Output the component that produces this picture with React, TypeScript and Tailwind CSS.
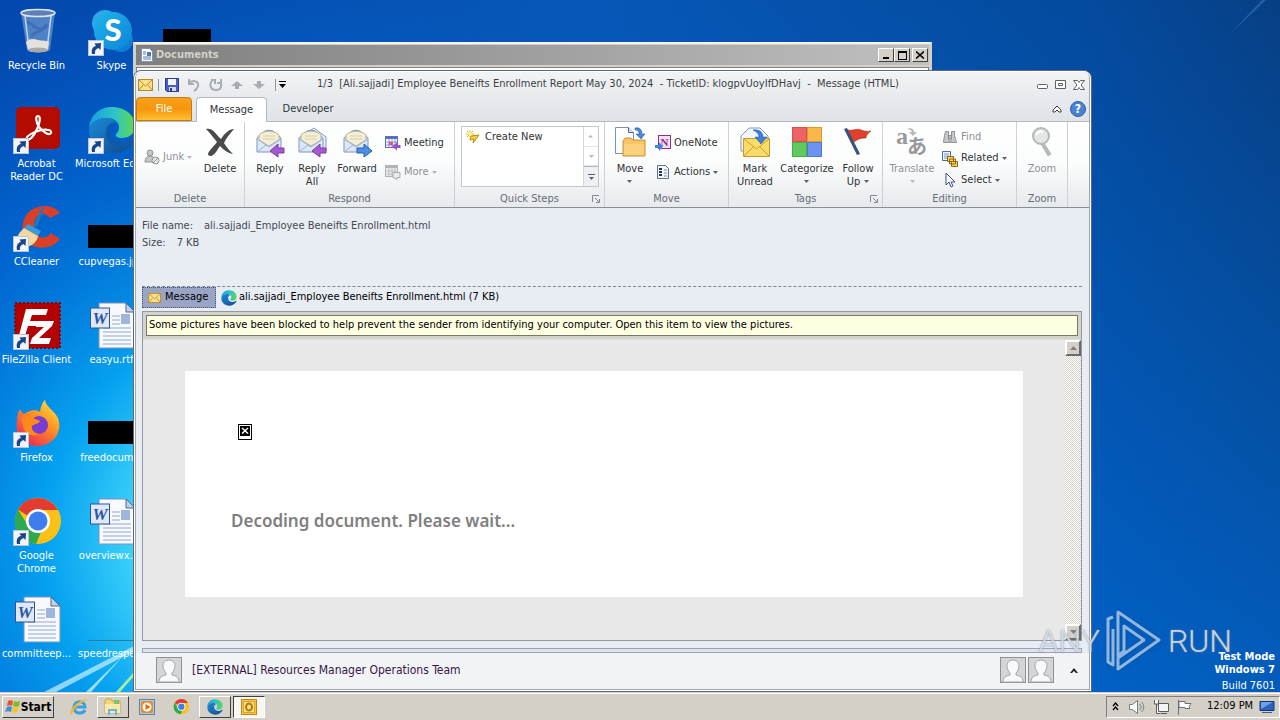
import type { ReactNode } from 'react';

type IconProps = { className?: string };

/* ---------- desktop icons ---------- */

function ShortcutArrow() {
  return (
    <svg viewBox="0 0 16 16" className="absolute bottom-0 left-0 size-4">
      <rect x="0.5" y="0.5" width="15" height="15" fill="#f2f4f7" stroke="#b9c4d4" />
      <path d="M4 14c-1-5 1-7.500 4-8L6.500 3.500 13 3l-.5 7-2-2C7.500 9 6.500 11 7 14z" fill="#17468f" />
    </svg>
  );
}

function RecycleBin() {
  return (
    <svg viewBox="0 0 48 48" className="size-12">
      <path d="M8 4h34l-5 38c-3 3-20 3-23 0z" fill="#6f9ad2" opacity="0.700" />
      <path d="M14 14c8 2 10 12 20 4M18 28c6-6 10-2 16-12" stroke="#2f5ea6" strokeWidth="3" opacity="0.500" fill="none" />
      <path d="M12 8l4 33M38 8l-4 33" stroke="#c4d6ec" strokeWidth="1.500" fill="none" />
      <path d="M13 34c4-4 8-3 12-2s7 0 11 2l-1 8c-4 3-17 3-20 0z" fill="#e4e2dc" />
      <ellipse cx="25" cy="42" rx="10" ry="2.500" fill="#a9a9a9" />
      <ellipse cx="25" cy="5" rx="17" ry="3.500" fill="#5d7fb4" stroke="#dfe6ee" strokeWidth="1.500" />
    </svg>
  );
}

function SkypeIcon() {
  return (
    <svg viewBox="0 0 48 48" className="size-12">
      <defs>
        <linearGradient id="skype" x1="0" y1="0" x2="1" y2="1">
          <stop offset="0" stopColor="#1fb4ec" />
          <stop offset="1" stopColor="#0d84d6" />
        </linearGradient>
      </defs>
      <circle cx="17" cy="15" r="13" fill="#29a9e8" />
      <circle cx="33" cy="32" r="12" fill="#0d7fd0" />
      <circle cx="25" cy="23" r="19" fill="url(#skype)" />
      <text x="25" y="33" textAnchor="middle" fontSize="31" fontWeight="900" fill="#fff" fontFamily="Lato, sans-serif">S</text>
    </svg>
  );
}

function AcrobatIcon() {
  return (
    <svg viewBox="0 0 48 48" className="size-12">
      <rect x="3" y="1" width="44" height="42" rx="5" fill="#b30b00" />
      <path
        d="M13 33c1-4 8-7 15-9 6-1 11 0 10 3-2 3-8-1-12-6-3-5-4-11-1-11s2 7-1 13c-3 7-8 13-11 10z"
        fill="none"
        stroke="#fff"
        strokeWidth="2.200"
      />
    </svg>
  );
}

function EdgeIcon({ className = 'size-12' }: IconProps) {
  return (
    <svg viewBox="0 0 48 48" className={className}>
      <defs>
        <linearGradient id="edgeTop" x1="0" y1="0.500" x2="1" y2="0.500">
          <stop offset="0" stopColor="#1b9de0" />
          <stop offset="0.550" stopColor="#2cc3c9" />
          <stop offset="1" stopColor="#62d94b" />
        </linearGradient>
        <linearGradient id="edgeLow" x1="0" y1="0" x2="1" y2="1">
          <stop offset="0" stopColor="#1b8ad8" />
          <stop offset="1" stopColor="#114a8b" />
        </linearGradient>
      </defs>
      <path d="M1 22C2 9 12 1 24 1c14 0 23 9 23 19 0 8-6 12-13 12-5 0-7-2-6-4 2-2 3-4 3-7 0-5-5-9-12-9C10 12 4 16 1 22z" fill="url(#edgeTop)" />
      <path d="M1 24c1-7 9-12 17-12 5 0 9 2 11 5-6-2-11 3-11 10 0 9 8 14 15 14 5 0 9-2 11-4-4 7-11 10-19 10C11 47 1 38 1 24z" fill="url(#edgeLow)" />
      <path d="M18 27c0-5 2-9 6-10-6 8-1 18 9 19 5 0 9-2 12-4 1 0 2 1 1 3-3 4-8 7-14 7-8-1-14-7-14-15z" fill="#0c5aa8" />
    </svg>
  );
}

function CCleanerIcon() {
  return (
    <svg viewBox="0 0 48 48" className="size-12">
      <path d="M47 9C40-1 22 0 14 10 6 21 9 37 20 42c10 4 21 1 27-7l-9-6c-5 6-12 6-15 0-4-7-2-15 3-18 4-2 8-1 11 3z" fill="#d9402a" />
      <path d="M29 3l2 1-7 19-4-1z" fill="#2477b8" />
      <path d="M15 20l13 7-3 5-14-8z" fill="#3c9bd6" />
      <path d="M11 24l14 8c-1 6-6 10-12 11L3 38c1-7 4-10 8-14z" fill="#f1d7a0" />
    </svg>
  );
}

function FileZillaIcon() {
  return (
    <svg viewBox="0 0 48 48" className="size-12">
      <rect x="2" y="1" width="45" height="45" fill="#b30000" stroke="#7d0b0b" strokeWidth="2" strokeDasharray="2 2" />
      <path d="M13 7h22l-2 6H19l-2 6h10l-2 5H15l-4 13H5z" fill="#fff" />
      <path d="M25 19h16l-2 5-13 12h12l-2 6H17l2-6 12-11h-8z" fill="#fff" />
    </svg>
  );
}

function FirefoxIcon() {
  return (
    <svg viewBox="0 0 48 48" className="size-12">
      <defs>
        <linearGradient id="ffx" x1="1" y1="0" x2="0.300" y2="1">
          <stop offset="0" stopColor="#fff14a" />
          <stop offset="0.450" stopColor="#ff9a1f" />
          <stop offset="1" stopColor="#ef2a55" />
        </linearGradient>
      </defs>
      <path d="M7 9c1 2 2 4 4 5 3-2 5-3 6-3 3-1 7-1 10 1C28 5 30 2 32 0c1 7 9 10 13 18 5 14-5 28-20 28C10 46 1 34 4 21c0-5 1-9 3-12z" fill="url(#ffx)" />
      <circle cx="26" cy="25" r="9" fill="#7a3bd0" />
      <path d="M8 19c4-4 10-3 14 0 2 1 4 1 5 2-1 3-6 3-8 5-1 4 3 8 8 8-8 4-17-1-17-9 0-2-1-4-2-6z" fill="#ff8a1c" />
    </svg>
  );
}

function ChromeIcon({ className = 'size-12' }: IconProps) {
  return (
    <svg viewBox="0 0 48 48" className={className}>
      <circle cx="25" cy="23" r="23" fill="#fbc116" />
      <path d="M25 0a23 23 0 0 1 20 12H25a11 11 0 0 0-10 6L5 11.500A23 23 0 0 1 25 0z" fill="#e33b2e" />
      <path d="M5 11.500l10.500 17A11 11 0 0 0 28 34l-5 12A23 23 0 0 1 5 11.500z" fill="#2da94f" />
      <circle cx="25" cy="23" r="12" fill="#fff" />
      <circle cx="25" cy="23" r="9.500" fill="#3d7df0" />
    </svg>
  );
}

function WordDoc() {
  return (
    <svg viewBox="0 0 48 48" className="size-12">
      <path d="M11 1h27l9 9v36H11z" fill="#f7f9fd" stroke="#7d93b8" />
      <path d="M38 1v9h9z" fill="#c3d0e4" stroke="#4c6793" />
      <path d="M15 26h28M15 30h28M15 34h28M15 38h28M15 42h28M24 14h8M24 18h8M24 22h8" stroke="#8fa9d3" />
      <rect x="33" y="12" width="9" height="10" fill="#9fb6da" />
      <rect x="2.500" y="6" width="19" height="20" fill="#dfe8f6" stroke="#2f5597" />
      <text x="12" y="22" textAnchor="middle" fontSize="17" fontStyle="italic" fontWeight="bold" fill="#2b55a3" fontFamily="'Liberation Serif', serif">W</text>
    </svg>
  );
}

function BlackThumb() {
  return <span className="mt-[21px] mb-1 block h-[23px] w-12 bg-black" />;
}

function EmptyThumb() {
  return <span className="block h-[45px] w-12 border-b border-[#2c7ea0]" />;
}

type DesktopItem = { label: string; icon: ReactNode; shortcut?: boolean; twoLines?: boolean };

const desktopColumns: DesktopItem[][] = [
  [
    { label: 'Recycle Bin', icon: <RecycleBin /> },
    { label: 'Acrobat Reader DC', icon: <AcrobatIcon />, shortcut: true, twoLines: true },
    { label: 'CCleaner', icon: <CCleanerIcon />, shortcut: true },
    { label: 'FileZilla Client', icon: <FileZillaIcon />, shortcut: true },
    { label: 'Firefox', icon: <FirefoxIcon />, shortcut: true },
    { label: 'Google Chrome', icon: <ChromeIcon />, shortcut: true, twoLines: true },
    { label: 'committeep...', icon: <WordDoc /> },
  ],
  [
    { label: 'Skype', icon: <SkypeIcon />, shortcut: true },
    { label: 'Microsoft Edge', icon: <EdgeIcon />, shortcut: true },
    { label: 'cupvegas.jpg', icon: <BlackThumb /> },
    { label: 'easyu.rtf', icon: <WordDoc /> },
    { label: 'freedocum...', icon: <BlackThumb /> },
    { label: 'overviewx.rtf', icon: <WordDoc /> },
    { label: 'speedrespe...', icon: <EmptyThumb /> },
  ],
  [{ label: '', icon: <BlackThumb /> }],
];

function DesktopIcon({ label, icon, shortcut, twoLines }: DesktopItem) {
  return (
    <button className="flex h-[98px] w-[75px] flex-col items-center text-[11px] leading-[13px] text-white" aria-label={label || 'Image'}>
      <span className="relative block h-12 w-12">
        {icon}
        {shortcut && <ShortcutArrow />}
      </span>
      <span className={twoLines ? 'mt-[3px] w-16 text-center' : 'mt-[3px] whitespace-nowrap'}>{label}</span>
    </button>
  );
}

function Wallpaper() {
  return (
    <svg className="absolute inset-0 size-full" viewBox="0 0 1280 692" preserveAspectRatio="none" aria-hidden="true">
      <defs>
        <linearGradient id="sky" x1="0" y1="0" x2="1" y2="0">
          <stop offset="0" stopColor="#0348ae" />
          <stop offset="0.450" stopColor="#0658b8" />
          <stop offset="0.850" stopColor="#044a9e" />
          <stop offset="1" stopColor="#073f84" />
        </linearGradient>
        <linearGradient id="skyLow" x1="0" y1="0" x2="0" y2="1">
          <stop offset="0" stopColor="#0070e0" stopOpacity="0" />
          <stop offset="1" stopColor="#0070e0" stopOpacity="0.600" />
        </linearGradient>
        <radialGradient id="glow" gradientUnits="userSpaceOnUse" cx="270" cy="540" r="560">
          <stop offset="0" stopColor="#7ff0ff" />
          <stop offset="0.240" stopColor="#3dd2fa" />
          <stop offset="0.400" stopColor="#05a5f2" stopOpacity="0.950" />
          <stop offset="0.700" stopColor="#0070dc" stopOpacity="0.600" />
          <stop offset="1" stopColor="#0060cc" stopOpacity="0" />
        </radialGradient>
      </defs>
      <rect width="1280" height="692" fill="url(#sky)" />
      <rect width="1280" height="692" fill="url(#skyLow)" />
      <rect width="1280" height="692" fill="url(#glow)" />
      <path d="M44 692L134 646V651L56 692z" fill="#d8f8ff" opacity="0.650" />
      <path d="M86 692L124 655L91 692z" fill="#d8f8ff" opacity="0.700" />
      <path d="M116 692L134 672V676L120 692z" fill="#a4f0a0" />
      <path d="M1230 34L1262 0h4z" fill="#4d8fc8" opacity="0.400" />
    </svg>
  );
}

/* ---------- ribbon icons ---------- */

function MailIcon({ className = 'h-3 w-4' }: IconProps) {
  return (
    <svg viewBox="0 0 16 12" className={className}>
      <rect x="0.500" y="0.500" width="14" height="11" fill="#fbe28a" stroke="#b58b1d" />
      <path d="M1 1l6.500 6L14 1M1 11l4-5M14 11l-4-5" fill="none" stroke="#b58b1d" />
    </svg>
  );
}

function SaveIcon() {
  return (
    <svg viewBox="0 0 14 14" className="size-[14px]">
      <path d="M.5.500h13v13H2l-1.500-1.500z" fill="#4a5fc4" stroke="#2d3c8e" />
      <rect x="3" y="1" width="8" height="6" fill="#f3f6fc" />
      <rect x="4" y="9" width="7" height="4" fill="#d4dcf0" />
      <rect x="5" y="10" width="2" height="3" fill="#2d3c8e" />
    </svg>
  );
}

function UndoIcon() {
  return (
    <svg viewBox="0 0 14 14" className="size-[14px]" fill="none" stroke="#a8adb3" strokeWidth="2">
      <path d="M2 1v5h5M2 6c3-5 10-3 9 2-.5 2-2 4-4 5" />
    </svg>
  );
}

function RedoIcon() {
  return (
    <svg viewBox="0 0 14 14" className="size-[14px]" fill="none" stroke="#a8adb3" strokeWidth="2">
      <path d="M3 3C0 6 1 12 7 12s6-6 4-8M2 2h4v4M8 5h4V1" />
    </svg>
  );
}

function StepArrow({ down }: { down?: boolean }) {
  return (
    <svg viewBox="0 0 12 10" className="h-[10px] w-3">
      <path d={down ? 'M4 1h4v3h4L6 9 0 4h4z' : 'M4 9h4V6h4L6 1 0 6h4z'} fill="#a8adb3" />
    </svg>
  );
}

function Caret({ light }: { light?: boolean }) {
  return (
    <svg viewBox="0 0 5 3" className="inline-block h-[3px] w-[5px] shrink-0">
      <path d="M0 0h5L2.500 3z" fill={light ? '#b4b8be' : '#5c6168'} />
    </svg>
  );
}

function JunkIcon() {
  return (
    <svg viewBox="0 0 16 16" className="size-4" fill="#c4c6c9" stroke="#8f9397">
      <circle cx="6" cy="4" r="3" />
      <path d="M1 13c0-4 2-6 5-6s5 2 5 6z" />
      <circle cx="11.500" cy="11.500" r="3.500" fill="#e6e7e9" />
      <path d="M9 14l5-5" />
    </svg>
  );
}

function DeleteIcon() {
  return (
    <svg viewBox="0 0 32 32" className="size-8">
      <path d="M2 3C8 1 12 8 17 13 20 8 25 3 30 3c-4 5-8 9-10 14 3 5 6 8 9 11-6-1-10-5-13-8-3 4-5 9-9 10-5 0-3-4 1-8 2-3 4-4 5-6C9 11 6 7 2 3z" fill="#4a4a4a" />
    </svg>
  );
}

function EnvelopeArrow({ kind }: { kind: 'reply' | 'replyAll' | 'forward' }) {
  return (
    <svg viewBox="0 0 32 32" className="size-8">
      {kind === 'replyAll' && <path d="M9 8l9-6 12 9v14H14" fill="#e6eefa" stroke="#7f9ac4" />}
      <path d="M3 12l8-7c2-1 6-1 8 0l8 7v14H3z" fill="#dce8f8" stroke="#7d96bd" />
      <path d="M5 14V9c4-5 16-5 20 0v5l-10 6z" fill="#f3eed6" stroke="#b9b294" />
      <path d="M9 10h12M9 13h12" stroke="#d8cfa6" />
      <path d="M3 13l12 8 12-8M3 26l9-7" fill="none" stroke="#9db2d2" />
      {kind === 'forward' ? (
        <path d="M16 22h7v-4l8 7-8 6v-4h-7z" fill="#4a8fe6" stroke="#235ea8" />
      ) : (
        <path d="M30 22h-6v-4l-8 7 8 6v-4h6z" fill="#a65ad0" stroke="#7a3aa5" />
      )}
    </svg>
  );
}

function MeetingIcon({ muted }: { muted?: boolean }) {
  const line = muted ? '#b0b3b7' : '#5a70c0';
  return (
    <svg viewBox="0 0 16 16" className="size-4">
      <rect x="0.500" y="1.500" width="12" height="11" fill={muted ? '#eceded' : '#fff'} stroke={line} />
      <path d="M1 3h11" stroke={line} strokeWidth="2" />
      <path d="M1 7h11M1 10h11M4 4v9M7 4v9M10 4v9" stroke={line} strokeWidth="0.700" />
      {!muted && <rect x="4" y="7" width="4" height="3" fill="#e0567a" />}
      {muted ? <path d="M8 8.500h7v5h-3v2l-4-2z" fill="#ececec" stroke="#a5a9ad" /> : <path d="M15.500 10H12V7.500l-5 4 5 4V13h3.500z" fill="#9a50cc" />}
    </svg>
  );
}

function QuickStepIcon() {
  return (
    <svg viewBox="0 0 14 14" className="size-[14px]">
      <path d="M5 6l8-1-6 8 1-4-4 1z" fill="#ffd43a" stroke="#b98a14" />
      <path d="M4 0v8M0 4h8M1 1l6 6M7 1L1 7" stroke="#e2b416" />
      <circle cx="4" cy="4" r="2" fill="#fff1a0" />
    </svg>
  );
}

function MoveIcon() {
  return (
    <svg viewBox="0 0 32 32" className="size-8">
      <path d="M1.500 1.500h13l5 5v21h-18z" fill="#fdfeff" stroke="#7c90b5" />
      <path d="M14.500 1.500v5h5" fill="#dbe4f2" stroke="#4c658f" />
      <path d="M9 15l2-3h6l2 2h12v16H9z" fill="#f7c566" stroke="#c8913a" />
      <path d="M10 18h20v11H10z" fill="#fbd27b" />
      <path d="M21 2c5-1 7 2 7 6h3l-4 5-5-5h3c0-3-1-4-4-4z" fill="#4a86dc" stroke="#28599f" strokeWidth="0.500" />
    </svg>
  );
}

function OneNoteIcon() {
  return (
    <svg viewBox="0 0 16 16" className="size-4">
      <rect x="3.500" y="0.500" width="12" height="13" fill="#f4dff2" stroke="#8c2f8a" />
      <text x="9.500" y="11" textAnchor="middle" fontSize="11" fontWeight="bold" fill="#8c2f8a" fontFamily="'Liberation Serif', serif">N</text>
      <path d="M0 10h4V7l4 4.500-4 4.500v-3H0z" fill="#3f86e0" />
    </svg>
  );
}

function ActionsIcon() {
  return (
    <svg viewBox="0 0 16 16" className="size-4">
      <path d="M2.500 1.500h8l3 3v10h-11z" fill="#f2f5fa" stroke="#5f6f88" />
      <path d="M4 5h3M4 8h3M4 11h3" stroke="#23324d" strokeWidth="2" />
      <path d="M9 6h3M9 9h3M9 12h3" stroke="#7b8aa5" />
    </svg>
  );
}

function MarkUnreadIcon() {
  return (
    <svg viewBox="0 0 32 32" className="size-8">
      <path d="M2 10L10 2h11l8 8v15H2z" fill="#f1f6fd" stroke="#8297bd" />
      <path d="M4.500 12.500h26v18h-26z" fill="#fbdc6a" stroke="#c79c28" />
      <path d="M5 13l12.500 10L30 13M5 30l9-9M30 30l-9-9" fill="none" stroke="#c79c28" />
      <path d="M14 4c7-1 10 3 10 7h4l-6 7-6-7h4c0-3-2-5-6-7z" fill="#3d7edb" stroke="#23559c" strokeWidth="0.500" />
    </svg>
  );
}

function CategorizeIcon() {
  return (
    <svg viewBox="0 0 32 32" className="size-8">
      <rect x="1.500" y="1.500" width="14" height="14" fill="#ee6464" stroke="#d65050" />
      <rect x="16.500" y="1.500" width="14" height="14" fill="#fbb84a" stroke="#dc9a34" />
      <rect x="1.500" y="16.500" width="14" height="14" fill="#5fcb5c" stroke="#48ae46" />
      <rect x="16.500" y="16.500" width="14" height="14" fill="#6c93ee" stroke="#4f78d4" />
    </svg>
  );
}

function FlagIcon() {
  return (
    <svg viewBox="0 0 32 32" className="size-8">
      <path d="M6 4c6 1 8-2 13 0 3 1 6 2 10 1-4 3-5 5-5 7-5 0-9 1-13 5z" fill="#e0402a" stroke="#a8281a" strokeWidth="0.600" />
      <path d="M2 3l3-1 13 26-3 1z" fill="#37507f" />
    </svg>
  );
}

function TranslateIcon() {
  return (
    <svg viewBox="0 0 32 32" className="size-8 overflow-visible" fill="#97999c">
      <text x="0" y="18" fontSize="24" fontWeight="bold" fontFamily="'Liberation Serif', serif">a</text>
      <text x="11" y="28" fontSize="20" fontWeight="bold" fontFamily="'Noto Sans CJK JP', sans-serif">あ</text>
      <path d="M11 3c4-2 7 0 7 3h3l-4 4-4-4h3c0-2-2-2-5-3z" fill="#b4b6b8" />
    </svg>
  );
}

function FindIcon() {
  return (
    <svg viewBox="0 0 16 16" className="size-4" fill="#c5c8cb" stroke="#8d9195">
      <path d="M3.500 2.500h3v4l1 7h-6l1-7zM9.500 2.500h3v4l2 7h-6l1-7zM6.500 6.500h3v3h-3z" />
    </svg>
  );
}

function RelatedIcon() {
  return (
    <svg viewBox="0 0 16 16" className="size-4">
      <path d="M.5.500h8v9h-8z" fill="#eef4fd" stroke="#4d6da8" />
      <path d="M2 3h5M2 5h5M2 7h5" stroke="#7f9bcc" />
      <path d="M5.500 5.500h6v5h-6zM7.500 8h6v5h-6zM9.500 10.500h6v5h-6z" fill="#fcd45c" stroke="#8b6a16" />
    </svg>
  );
}

function SelectIcon() {
  return (
    <svg viewBox="0 0 16 16" className="size-4">
      <path d="M4 1v12l3-3 2 5 2-1-2-4h4z" fill="#fff" stroke="#3a4f80" />
    </svg>
  );
}

function ZoomIcon() {
  return (
    <svg viewBox="0 0 32 32" className="size-8">
      <path d="M18 17l7 11-3 2-7-12z" fill="#b8babd" stroke="#96999c" strokeWidth="0.500" />
      <circle cx="15" cy="10" r="8" fill="#e4e5e7" stroke="#b3b6b9" strokeWidth="2" />
      <path d="M10 9c1-3 4-4 7-3" stroke="#fff" strokeWidth="2" fill="none" />
    </svg>
  );
}

/* ---------- ribbon ---------- */

type BigButtonProps = { icon: ReactNode; label: ReactNode; className: string; muted?: boolean; menu?: boolean };

function BigButton({ icon, label, className, muted, menu }: BigButtonProps) {
  return (
    <button className={`flex shrink-0 flex-col items-center gap-1 leading-[13px] ${muted ? 'text-[#8c9096]' : 'text-[#303338]'} ${className}`}>
      {icon}
      <span className="flex flex-col items-center whitespace-nowrap">
        {label}
        {menu && (
          <span className="flex h-3 items-center">
            <Caret light={muted} />
          </span>
        )}
      </span>
    </button>
  );
}

type SmallButtonProps = { icon: ReactNode; label: string; muted?: boolean; menu?: boolean };

function SmallButton({ icon, label, muted, menu }: SmallButtonProps) {
  return (
    <button className={`flex h-[22px] items-center gap-[3px] whitespace-nowrap ${muted ? 'text-[#8c9096]' : 'text-[#303338]'}`}>
      {icon}
      <span>{label}</span>
      {menu && <Caret light={muted} />}
    </button>
  );
}

function Launcher() {
  return (
    <svg viewBox="0 0 8 8" className="absolute right-1 bottom-1 size-2" fill="none" stroke="#84898f">
      <path d="M.5 7V.500H7M3 3l4 4M7.500 4v3.500H4" />
    </svg>
  );
}

type GroupProps = { title: string; className: string; children: ReactNode; launcher?: boolean };

function Group({ title, className, children, launcher }: GroupProps) {
  return (
    <section className={`relative flex shrink-0 flex-col border-r border-[#cdd1d6] ${className}`}>
      <div className="flex h-[69px] pt-1">{children}</div>
      <h2 className="text-center leading-4 text-[#666c75]">{title}</h2>
      {launcher && <Launcher />}
    </section>
  );
}

function Ribbon() {
  return (
    <div className="flex h-[86px] overflow-hidden border-b border-[#8a8f96] bg-linear-to-b from-white via-[#fbfcfc] to-[#e6e9ed]">
      <Group title="Delete" className="w-[109px]">
        <div className="flex h-[62px] w-[62px] items-center pl-2">
          <SmallButton icon={<JunkIcon />} label="Junk" muted menu />
        </div>
        <BigButton icon={<DeleteIcon />} label="Delete" className="w-11" />
      </Group>
      <Group title="Respond" className="w-[210px]">
        <BigButton icon={<EnvelopeArrow kind="reply" />} label="Reply" className="ml-[5px] w-10" />
        <BigButton icon={<EnvelopeArrow kind="replyAll" />} label={<>Reply<br />All</>} className="w-11 text-center" />
        <BigButton icon={<EnvelopeArrow kind="forward" />} label="Forward" className="w-[46px]" />
        <div className="flex flex-col gap-[7px] pt-[6px] pl-[5px]">
          <SmallButton icon={<MeetingIcon />} label="Meeting" />
          <SmallButton icon={<MeetingIcon muted />} label="More" muted menu />
        </div>
      </Group>
      <Group title="Quick Steps" className="w-[150px]" launcher>
        <div className="ml-[6px] flex h-[61px] w-[138px] border border-[#c3c7cd] bg-white">
          <button className="flex h-5 flex-1 items-center gap-[5px] pl-1 text-[#303338]">
            <QuickStepIcon />
            Create New
          </button>
          <div className="flex w-[15px] flex-col border-l border-[#d5d8dc]">
            <button aria-label="Scroll up" className="flex flex-1 rotate-180 items-center justify-center"><Caret light /></button>
            <button aria-label="Scroll down" className="flex flex-1 items-center justify-center border-y border-[#e3e5e8]"><Caret light /></button>
            <button aria-label="More steps" className="flex flex-1 flex-col items-center justify-center gap-[2px] border-t border-[#b0b4ba] bg-[#eef0f3]">
              <span className="h-px w-[7px] bg-[#5c6168]" />
              <Caret />
            </button>
          </div>
        </div>
      </Group>
      <Group title="Move" className="w-[124px]">
        <BigButton icon={<MoveIcon />} label="Move" className="ml-[5px] w-10" menu />
        <div className="flex flex-col gap-[7px] pt-[6px] pl-[5px]">
          <SmallButton icon={<OneNoteIcon />} label="OneNote" />
          <SmallButton icon={<ActionsIcon />} label="Actions" menu />
        </div>
      </Group>
      <Group title="Tags" className="w-[154px]" launcher>
        <BigButton icon={<MarkUnreadIcon />} label={<>Mark<br />Unread</>} className="ml-1 w-11 text-center" />
        <BigButton icon={<CategorizeIcon />} label="Categorize" className="w-[60px]" menu />
        <BigButton
          icon={<FlagIcon />}
          label={<><span>Follow</span><span className="flex items-center gap-1">Up <Caret /></span></>}
          className="w-[42px]"
        />
      </Group>
      <Group title="Editing" className="w-[134px]">
        <BigButton icon={<TranslateIcon />} label="Translate" className="ml-1 w-[50px]" muted menu />
        <div className="flex flex-col pl-[5px]">
          <SmallButton icon={<FindIcon />} label="Find" muted />
          <SmallButton icon={<RelatedIcon />} label="Related" menu />
          <SmallButton icon={<SelectIcon />} label="Select" menu />
        </div>
      </Group>
      <Group title="Zoom" className="w-[51px]">
        <BigButton icon={<ZoomIcon />} label="Zoom" className="w-full" muted />
      </Group>
    </div>
  );
}

/* ---------- windows ---------- */

function DocumentsWindow() {
  const control = 'flex h-[14px] w-4 items-center justify-center border border-t-white border-l-white border-r-[#404040] border-b-[#404040] bg-[#d4d0c8]';
  return (
    <section className="absolute top-[42px] left-[133px] h-14 w-[799px] border-2 border-[#d4d0c8] border-t-[#f4f3f0] bg-[#d4d0c8] p-px">
      <div className="flex h-5 items-center bg-linear-to-r from-[#7f7f7f] to-[#c0c0c0] pr-[1px] pl-1">
        <svg viewBox="0 0 14 14" className="size-[14px]">
          <path d="M1.500.500h8l3 3v10h-11z" fill="#fff" stroke="#7d93b8" />
          <path d="M3 4h3M3 6h3M3 9h8M3 11h8" stroke="#5b79b5" />
          <rect x="7" y="4" width="4" height="4" fill="#4878c0" />
        </svg>
        <h1 className="ml-[2px] flex-1 text-[11px] font-bold text-[#d4d0c8]">Documents</h1>
        <button aria-label="Minimize" className={control}><span className="mt-[6px] h-[2px] w-[6px] bg-black" /></button>
        <button aria-label="Maximize" className={control}><span className="h-[9px] w-[9px] border border-t-2 border-black" /></button>
        <button aria-label="Close" className={`ml-[2px] ${control}`}>
          <svg viewBox="0 0 8 8" className="size-2"><path d="M0 .500l8 7M8 .500l-8 7" stroke="#000" strokeWidth="1.600" /></svg>
        </button>
      </div>
      <div className="mt-[2px] h-4 border border-[#808080] border-b-0 bg-white" />
    </section>
  );
}

function Avatar() {
  return (
    <svg viewBox="0 0 26 26" className="size-[26px]">
      <rect x="0.500" y="0.500" width="25" height="25" fill="#d3d5d7" stroke="#8d9095" />
      <path d="M3 25c0-5 3-6 7-7v-2c-2-2-3-5-3-7 0-8 12-8 12 0 0 2-1 5-3 7v2c4 1 7 2 7 7z" fill="#f8f9fa" stroke="#a3a6aa" />
    </svg>
  );
}

function TitleBar() {
  return (
    <header className="flex h-[25px] items-center pr-1 pl-[2px] text-[#3b3f45]">
      <MailIcon />
      <span className="mx-1 h-3 w-px bg-[#8f949b]" />
      <span className="mr-px h-3 w-px bg-white" />
      <div className="flex items-center gap-2">
        <button aria-label="Save"><SaveIcon /></button>
        <button aria-label="Undo"><UndoIcon /></button>
        <button aria-label="Redo"><RedoIcon /></button>
        <button aria-label="Previous item"><StepArrow /></button>
        <button aria-label="Next item" className="ml-[2px]"><StepArrow down /></button>
      </div>
      <span className="ml-[10px] h-3 w-px bg-[#8f949b]" />
      <button aria-label="Customize toolbar" className="ml-[2px] flex w-[9px] flex-col items-center gap-[2px]">
        <span className="h-px w-[7px] bg-black" />
        <svg viewBox="0 0 7 4" className="h-1 w-[7px]"><path d="M0 0h7L3.500 4z" /></svg>
      </button>
      <h1 className="ml-[30px] flex-1 overflow-hidden text-[11px] whitespace-pre">
        {'1/3  [Ali.sajjadi] Employee Beneifts Enrollment Report May 30, 2024  - TicketID: klogpvUoyIfDHavj  -  Message (HTML)'}
      </h1>
      <div className="flex gap-[6px]">
        <button aria-label="Minimize"><svg viewBox="0 0 12 12" className="size-3" fill="#fff" stroke="#5b6068"><rect x="0.500" y="5.500" width="10" height="4" rx="1" /></svg></button>
        <button aria-label="Restore"><svg viewBox="0 0 12 12" className="size-3" fill="#fff" stroke="#5b6068"><path d="M.5 1.500h10v8H.5zM3.500 4.500h4v2h-4z" /></svg></button>
        <button aria-label="Close"><svg viewBox="0 0 12 12" className="size-3" fill="#fff" stroke="#5b6068"><path d="M.5 1.500h4L6 3.500l1.500-2h4L8 6l3.500 4.500h-4L6 8.500l-1.500 2h-4L4 6z" /></svg></button>
      </div>
    </header>
  );
}

function ScrollBar() {
  const arrow = 'flex size-4 items-center justify-center border-2 border-t-white border-l-white border-r-[#6b6b6b] border-b-[#6b6b6b] bg-[#d4d0c8]';
  return (
    <div className="flex w-4 shrink-0 flex-col justify-between bg-[repeating-conic-gradient(#d4d0c8_0_25%,#ffffff_0_50%)] bg-size-[2px_2px]">
      <button aria-label="Scroll up" className={arrow}>
        <svg viewBox="0 0 7 4" className="h-1 w-[7px]"><path d="M0 4h7L3.500 0z" fill="#808080" /></svg>
      </button>
      <button aria-label="Scroll down" className={arrow}>
        <svg viewBox="0 0 7 4" className="h-1 w-[7px]"><path d="M0 0h7L3.500 4z" fill="#808080" /></svg>
      </button>
    </div>
  );
}

function OutlookWindow() {
  return (
    <section className="absolute top-[70px] right-[188px] bottom-0 left-[133px] flex flex-col rounded-t-lg border border-[#5f6975] bg-white p-px pb-0">
      <div className="flex min-h-0 flex-1 flex-col overflow-hidden rounded-t-md border-x border-[#a3a8b0] bg-[#e8ecf3]">
        <div className="bg-linear-to-b from-[#f1f3f5] to-[#dfe3e7]">
          <TitleBar />
          <nav className="flex h-[25px] items-end border-b border-[#b4b9bf] text-[11px] text-[#303338]">
            <button className="h-6 w-14 rounded-t-sm border border-[#c87a12] bg-linear-to-b from-[#f7a21b] via-[#f79508] to-[#ffc02e] text-white">File</button>
            <button className="-mb-px ml-1 h-[25px] w-[71px] rounded-t-sm border border-b-0 border-[#b4b9bf] bg-white">Message</button>
            <button className="ml-[6px] h-6 w-[70px]">Developer</button>
            <div className="ml-auto flex h-full items-center gap-2 pr-[3px]">
              <button aria-label="Collapse ribbon">
                <svg viewBox="0 0 10 8" className="h-2 w-[10px]"><path d="M1 5l4-4 4 4v2H7L5 5 3 7H1z" fill="#fff" stroke="#3b3f45" /></svg>
              </button>
              <button aria-label="Help" className="size-4 rounded-full border border-[#2c5da8] bg-[#4b83d4] text-[12px] leading-[14px] font-bold text-white">?</button>
            </div>
          </nav>
        </div>
        <Ribbon />

        <div className="flex min-h-0 flex-1 flex-col pr-[7px] pl-[6px]">
          <dl className="h-[78px] pt-[9px] leading-[17px] text-[#454a52]">
            <div className="flex gap-[11px]"><dt>File name:</dt><dd>ali.sajjadi_Employee Beneifts Enrollment.html</dd></div>
            <div className="flex gap-[11px]"><dt>Size:</dt><dd>7 KB</dd></div>
          </dl>
          <div className="flex h-[22px] border-t border-dashed border-[#7e8798] text-black">
            <button className="flex w-[74px] items-center gap-[3px] border border-dotted border-[#4d5468] bg-[#9aa4c4] pl-[5px]">
              <MailIcon className="h-[10px] w-[14px]" />
              Message
            </button>
            <button className="ml-[5px] flex items-center gap-[2px]">
              <EdgeIcon className="size-4" />
              ali.sajjadi_Employee Beneifts Enrollment.html (7 KB)
            </button>
          </div>
          <div className="mt-[3px] flex min-h-0 flex-1 flex-col border border-[#9298a6] bg-[#e8e8e8]">
            <div className="border-b border-[#e0dfd8] bg-[#d3d2cb] p-[3px]">
              <button className="block h-[21px] w-full overflow-hidden border border-[#77776a] bg-[#ffffe1] pl-[2px] text-left text-[11px] whitespace-nowrap text-black">
                Some pictures have been blocked to help prevent the sender from identifying your computer. Open this item to view the pictures.
              </button>
            </div>
            <div className="flex min-h-0 flex-1">
              <main className="min-w-0 flex-1 px-[42px] pt-[31px] pb-[43px]">
                <article className="h-full bg-white pt-[53px] pl-[46px]">
                  <div className="ml-[7px] h-4 w-[14px] border border-black p-px">
                    <svg viewBox="0 0 10 10" className="size-[10px]"><rect width="10" height="10" /><path d="M2 2l6 5.500M8 2L2 7.500" stroke="#fff" strokeWidth="1.500" /></svg>
                  </div>
                  <p className="mt-[69px] font-['Noto_Sans',sans-serif] text-[17px] leading-6 font-semibold text-[#7f7f7f]">Decoding document. Please wait...</p>
                </article>
              </main>
              <ScrollBar />
            </div>
          </div>
          <div className="mt-[7px] h-[5px] border border-[#9ba2b3] bg-[#dfe3ec]" />
        </div>
        <footer className="flex h-[37px] items-center border-b border-[#a3a8b0] bg-[#f1f3f6] pr-[11px] pb-[2px] pl-5">
          <Avatar />
          <span className="ml-[10px] flex-1 text-[12px] text-[#38183f]">[EXTERNAL] Resources Manager Operations Team</span>
          <div className="flex gap-[2px]"><Avatar /><Avatar /></div>
          <button aria-label="Expand people pane" className="ml-4">
            <svg viewBox="0 0 8 5" className="h-[5px] w-2"><path d="M0 5l4-5 4 5H6L4 3 2 5z" fill="#222" /></svg>
          </button>
        </footer>
      </div>
      <div className="h-px bg-white" />
    </section>
  );
}

function Watermark() {
  return (
    <div className="pointer-events-none absolute right-12 bottom-[19px] flex items-center gap-[6px] font-['Roboto',sans-serif] text-[32px] leading-none font-light text-[#e4ecf5]/80 [text-shadow:0_0_2px_#7f8894]">
      <span>ANY</span>
      <svg viewBox="0 0 56 64" className="h-16 w-14 drop-shadow-sm" fill="none" stroke="#dfe8f2" strokeOpacity="0.650" strokeWidth="3" strokeLinejoin="round">
        <path d="M12 3L53 31 12 60V49L38 31 18 17V42L12 47z" />
        <path d="M7 8L2 10V53L7 56V20" />
      </svg>
      <span>RUN</span>
    </div>
  );
}

/* ---------- taskbar ---------- */

function StartFlag() {
  return (
    <svg viewBox="0 0 16 14" className="h-[14px] w-4">
      <path d="M3 1c2-1 3-1 5 0L7 6C5 5 4 5 2 6z" fill="#e8512a" />
      <path d="M9 1c2 1 4 1 6 0l-1 5c-2 1-4 1-6 0z" fill="#7fba28" />
      <path d="M2 7c2-1 3-1 5 0l-1 5c-2-1-4-1-6 0z" fill="#3a8ede" />
      <path d="M8 7c2 1 4 1 6 0l-2 5c-2 1-3 1-5 0z" fill="#f8c324" />
    </svg>
  );
}

function IeIcon() {
  return (
    <svg viewBox="0 0 18 18" className="size-[18px]" fill="none">
      <path d="M15 12c-2 4-11 5-11-3C4 2 15 2 15 9H5" stroke="#3b9fe0" strokeWidth="3" />
      <path d="M1 16C-1 12 9 2 17 2c-4 0-13 7-16 14z" stroke="#f2b92c" strokeWidth="1.200" />
    </svg>
  );
}

function FolderIcon() {
  return (
    <svg viewBox="0 0 18 18" className="size-[18px]">
      <path d="M1 3l1-2h5l1 2h8v12H1z" fill="#f4d878" stroke="#c9a648" />
      <path d="M10 2h5v4h-5z" fill="#7cc46c" />
      <path d="M1 6h15v9H1z" fill="#fbe9a8" />
      <path d="M4 17v-6h9v6h-2v-4H6v4z" fill="#6cb4e4" />
    </svg>
  );
}

function MediaIcon() {
  return (
    <svg viewBox="0 0 16 16" className="size-4">
      <rect x="0.500" y="0.500" width="15" height="15" fill="#a9cbe8" stroke="#4f88b9" />
      <rect x="2" y="2" width="12" height="12" rx="2" fill="#f08a1c" />
      <circle cx="8" cy="8" r="4.500" fill="#fff" />
      <path d="M6.500 5v6l5-3z" fill="#e0660c" />
    </svg>
  );
}

function OutlookIcon() {
  return (
    <svg viewBox="0 0 16 16" className="size-4">
      <rect x="0.500" y="0.500" width="15" height="15" fill="#f6c63c" stroke="#c08812" />
      <rect x="2.500" y="2.500" width="11" height="11" fill="#fbe08a" stroke="#dba52c" />
      <ellipse cx="8" cy="8" rx="3" ry="3.500" fill="none" stroke="#b87a0c" strokeWidth="2" />
    </svg>
  );
}

const raised = 'border border-t-white border-l-white border-r-[#404040] border-b-[#404040]';

const tasks: { name: string; icon: ReactNode; look: string }[] = [
  { name: 'Internet Explorer', icon: <IeIcon />, look: '' },
  { name: 'Windows Explorer', icon: <FolderIcon />, look: raised },
  { name: 'Media Player', icon: <MediaIcon />, look: '' },
  { name: 'Chrome', icon: <ChromeIcon className="size-4" />, look: '' },
  { name: 'Edge', icon: <EdgeIcon className="size-4" />, look: raised },
  { name: 'Outlook', icon: <OutlookIcon />, look: 'border border-t-[#404040] border-l-[#404040] border-r-white border-b-white bg-[#f8f7f5]' },
];

function Taskbar() {
  return (
    <footer className="flex h-7 shrink-0 items-center border-t border-[#d4d0c8] bg-[#d4d0c8] pl-[2px] text-[11px] text-black shadow-[inset_0_1px_0_#ffffff]">
      <button className={`flex h-[22px] w-[52px] items-center justify-center text-[12px] font-bold ${raised}`}>
        <StartFlag />
        Start
      </button>
      <div className="ml-[9px] flex gap-[2px]">
        {tasks.map((task) => (
          <button key={task.name} aria-label={task.name} className={`flex h-[22px] w-8 items-center justify-center ${task.look}`}>
            {task.icon}
          </button>
        ))}
      </div>
      <div className="ml-auto flex h-[22px] w-[174px] items-center border border-t-[#808080] border-l-[#808080] border-r-white border-b-white pl-[5px]">
        <button aria-label="Show hidden icons">
          <svg viewBox="0 0 7 9" className="h-[9px] w-[7px]" fill="none" stroke="#000" strokeWidth="1.300"><path d="M1 4l2.500-3L6 4M1 8l2.500-3L6 8" /></svg>
        </button>
        <svg viewBox="0 0 16 16" className="ml-[10px] size-4" fill="#fff" stroke="#77797c"><path d="M.5 5.500h3l5-4v13l-5-4h-3z" /><path d="M10.500 5c2 2 2 4 0 6M12.500 3c3 3 3 7 0 10" fill="none" /></svg>
        <svg viewBox="0 0 16 16" className="ml-2 size-4" fill="#f4f4f4" stroke="#5b5d60"><path d="M5.500 4.500h10v8h-10zM8 14.500h6M1.500 1v4h4V1M3.500 5v9.500h4" /></svg>
        <svg viewBox="0 0 16 16" className="ml-2 size-4" fill="#fff" stroke="#6d6f72"><path d="M1.500 1v15M2 2.500h6v2h6l-2 3 1 2H8v-1H2z" /></svg>
        <span className="ml-[14px] whitespace-nowrap">12:09 PM</span>
        <svg viewBox="0 0 16 14" className="mr-1 ml-auto h-[14px] w-4"><path d="M1 1.500h14v9H1z" fill="#2a62c4" stroke="#15356f" /><path d="M2 2h12L2 9z" fill="#6fa0ea" /><path d="M3 12.500h10" stroke="#4c5b78" /></svg>
      </div>
    </footer>
  );
}

export default function App() {
  return (
    <div className="flex h-screen w-full flex-col overflow-hidden bg-[#0358b8] font-['DejaVu_Sans_Condensed','DejaVu_Sans',sans-serif] text-[11px]">
      <div className="relative min-h-0 flex-1 overflow-hidden">
        <Wallpaper />
        <div className="relative -ml-px flex pt-2">
          {desktopColumns.map((column, index) => (
            <div key={index} className="flex flex-col">
              {column.map((item) => (
                <DesktopIcon key={item.label} {...item} />
              ))}
            </div>
          ))}
        </div>
        <DocumentsWindow />
        <OutlookWindow />
        <Watermark />
        <div className="absolute right-[5px] bottom-0 text-right leading-[13px] text-white">
          <p className="font-bold">Test Mode</p>
          <p className="font-bold">Windows 7</p>
          <p className="mt-[3px]">Build 7601</p>
        </div>
      </div>
      <Taskbar />
    </div>
  );
}
